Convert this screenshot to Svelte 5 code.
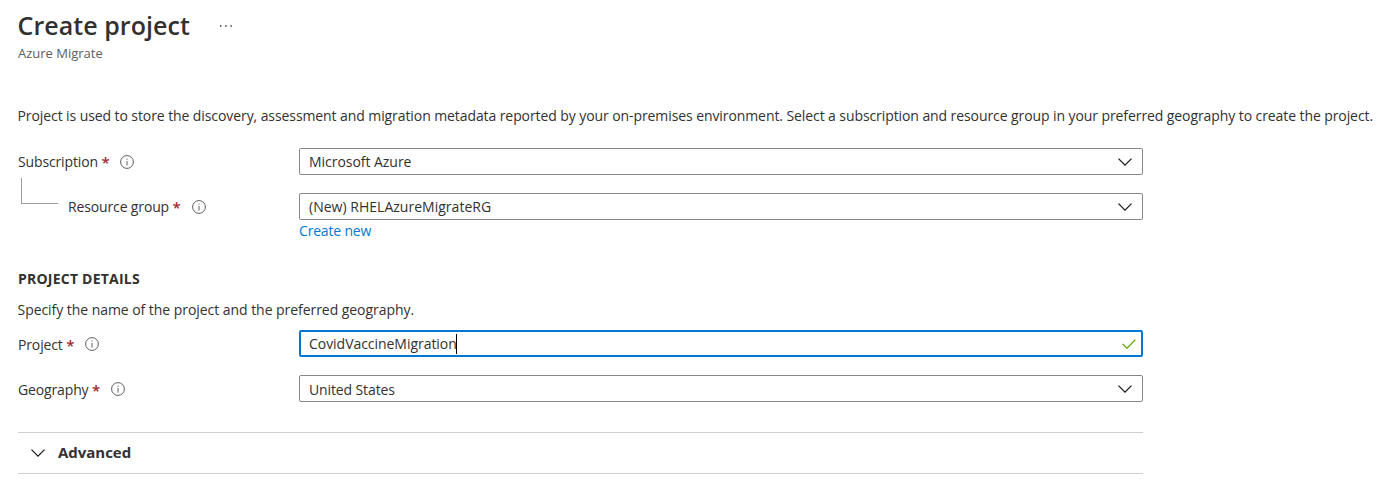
<script>
  let project = $state('CovidVaccineMigration');
</script>

{#snippet info()}
  <svg class="info" width="14" height="14" viewBox="0 0 14 14" aria-hidden="true">
    <circle cx="7" cy="7" r="6.4" fill="none" stroke="#605e5c" stroke-width="1" />
    <path d="M7 6v4.5M7 3.6v1.1" stroke="#605e5c" stroke-width="1" />
  </svg>
{/snippet}

{#snippet chevron()}
  <svg class="chevron" width="14" height="8" viewBox="0 0 14 8" aria-hidden="true">
    <path d="M.5.6 7 7.1 13.5.6" fill="none" stroke="#1b1a19" stroke-width="1.3" />
  </svg>
{/snippet}

<main>
  <header>
    <h1>Create project</h1>
    <svg class="more" width="14" height="4" viewBox="0 0 14 4" aria-hidden="true">
      <path d="M1 1.3h1.4v1.4H1zM6.2 1.3h1.4v1.4H6.200zM11.400 1.3h1.4v1.4h-1.4z" fill="#323130" />
    </svg>
  </header>
  <div class="subtitle">Azure Migrate</div>
  <p class="intro">Project is used to store the discovery, assessment and migration metadata reported by your on-premises environment. Select a subscription and resource group in your preferred geography to create the project.</p>

  <div class="row">
    <div class="label"><span>Subscription</span><b>*</b>{@render info()}</div>
    <div class="field"><span>Microsoft Azure</span>{@render chevron()}</div>
  </div>
  <div class="row nested">
    <div class="label"><i class="elbow"></i><span>Resource group</span><b>*</b>{@render info()}</div>
    <div class="field group"><span>(New) RHELAzureMigrateRG</span>{@render chevron()}</div>
  </div>
  <div class="link"><span>Create new</span></div>

  <h2>PROJECT DETAILS</h2>
  <p class="hint">Specify the name of the project and the preferred geography.</p>

  <div class="row">
    <div class="label low"><span>Project</span><b>*</b>{@render info()}</div>
    <div class="field active">
      <span>{project}</span><i class="caret"></i>
      <svg class="check" width="14" height="10" viewBox="0 0 14 10" aria-hidden="true">
        <path d="M.6 4.800 5 9.200 13.400.7" fill="none" stroke="#57a300" stroke-width="1.2" />
      </svg>
    </div>
  </div>
  <div class="row nested">
    <div class="label low"><span>Geography</span><b>*</b>{@render info()}</div>
    <div class="field low"><span>United States</span>{@render chevron()}</div>
  </div>

  <section class="advanced">{@render chevron()}<span>Advanced</span></section>
</main>

<style>
  :global(body) { margin: 0; background: #fff; }
  main {
    box-sizing: border-box;
    width: 1397px;
    height: 498px;
    padding: 7px 0 0 18px;
    overflow: hidden;
    font: 14px/20px "Open Sans", sans-serif;
    letter-spacing: -0.087px;
    color: #323130;
    white-space: nowrap;
  }
  header { display: flex; align-items: center; height: 37px; }
  h1 { margin: -1px 0 0 -0.5px; width: 201.5px; font-size: 25px; line-height: 36px; font-weight: 600; letter-spacing: 0.05px; }
  .subtitle { height: 20px; line-height: 19px; font-size: 13px; letter-spacing: 0; color: #605e5c; }
  .intro { margin: 42px 0 22px -0.5px; height: 20px; }
  .row { display: flex; height: 27px; }
  .nested { margin-top: 18px; }
  .label { box-sizing: border-box; display: flex; align-items: center; width: 281px; letter-spacing: -0.14px; }
  .label.low { padding-top: 2px; }
  .label b { margin-left: 3.5px; color: #a4262c; font-size: 15px; font-weight: 600; }
  .info { margin-left: 11px; }
  .low .info { margin-top: -1px; }
  .elbow {
    box-sizing: border-box;
    width: 37px;
    height: 26px;
    margin: -31px 10px 0 3px;
    border: solid #a19f9d;
    border-width: 0 0 1px 1px;
  }
  .field {
    box-sizing: border-box;
    display: flex;
    align-items: center;
    width: 844px;
    height: 27px;
    padding: 0 10px 0 9px;
    border: 1px solid #8a8886;
    border-radius: 2px;
    letter-spacing: -0.04px;
  }
  .group { letter-spacing: 0.02px; }
  .field.low { letter-spacing: -0.12px; }
  .field.low span { padding-top: 2px; }
  .field svg { margin-left: auto; }
  .active { padding: 0 5px 0 8px; border: 2px solid #0078d4; letter-spacing: -0.04px; }
  .caret { width: 1px; height: 20px; margin-left: -1px; background: #000; }
  .link { margin: 1px 0 0 281px; height: 20px; letter-spacing: -0.18px; color: #0078d4; }
  h2 { margin: 28px 0 0; height: 20px; font-size: 14px; line-height: 20px; font-weight: 700; letter-spacing: 0.22px; }
  .hint { margin: 11px 0 10px -0.5px; height: 20px; letter-spacing: -0.05px; }
  .advanced {
    box-sizing: border-box;
    display: flex;
    align-items: center;
    width: 1125px;
    height: 42px;
    margin-top: 30px;
    padding-left: 13px;
    border: solid #d2d0ce;
    border-width: 1px 0;
    font-size: 15px;
    font-weight: 700;
    letter-spacing: -0.03px;
  }
  .advanced span { margin: -3px 0 0 13px; }
</style>
